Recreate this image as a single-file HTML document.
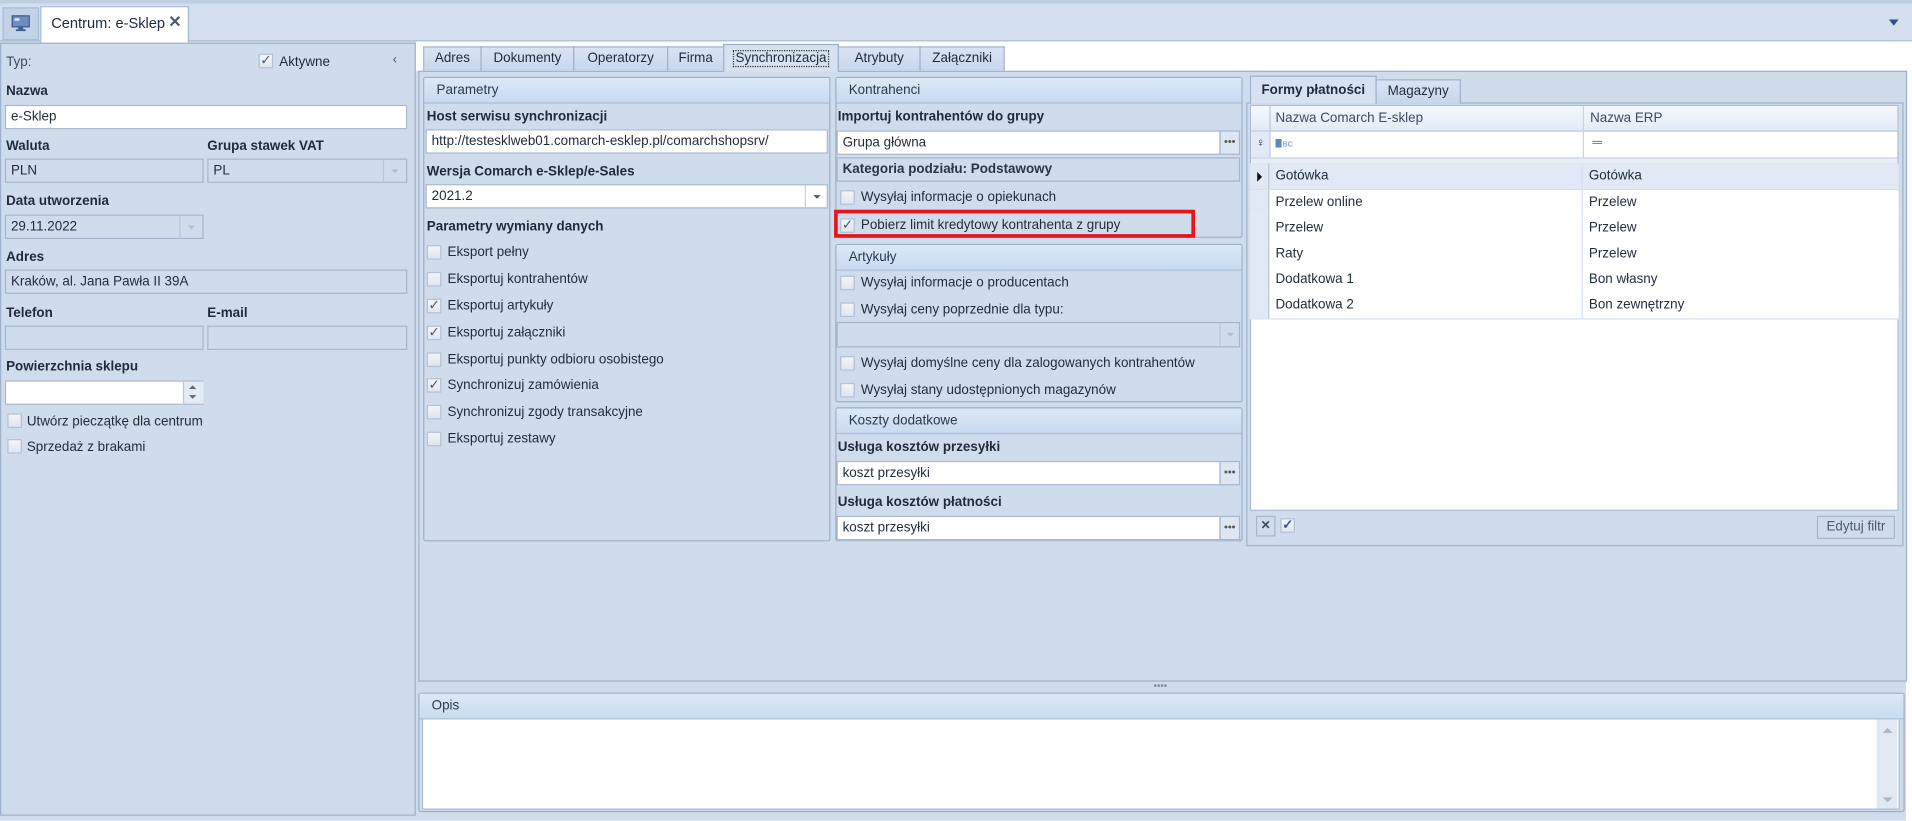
<!DOCTYPE html>
<html><head><meta charset="utf-8">
<style>
html,body{margin:0;padding:0;width:1912px;height:820px;overflow:hidden;background:#fff}
#w{position:absolute;left:0;top:0;width:1568px;height:673px;transform:scale(1.2194);transform-origin:0 0;background:#cfdcec;font-family:"Liberation Sans",sans-serif;font-size:11px;color:#1f2b3c}
.a{position:absolute}
.t{position:absolute;white-space:nowrap;line-height:14px}
.b{font-weight:bold}
.inp{position:absolute;box-sizing:border-box;background:#fff;border:1px solid #a6b7cd;height:20px;line-height:18px;padding-left:4px;white-space:nowrap}
.dis{background:#cfdcec}
.grp{position:absolute;box-sizing:border-box;border:1px solid #9db0ca;border-radius:2px}
.gh{position:absolute;left:0;right:0;top:0;height:20px;background:linear-gradient(#dce8f7,#c9dbf1);border-bottom:1px solid #a9bdd6;line-height:20px;padding-left:10px;color:#2a3850}
.cb{position:absolute;width:10px;height:10px;border:1px solid #b3c2d6;background:linear-gradient(#f2f5f9,#dfe6ef);font-size:11px;line-height:10px;text-align:center;color:#4b5970}
.btn{position:absolute;box-sizing:border-box;width:17px;height:20px;border:1px solid #a6b7cd;background:#dde7f3;font-size:9px;text-align:center;line-height:16px;color:#555}
.arr{position:absolute;width:0;height:0;border-left:3px solid transparent;border-right:3px solid transparent;border-top:3px solid #8a96a8}
.tab{position:absolute;top:38px;height:20px;box-sizing:border-box;border:1px solid #9fb2cb;border-bottom:none;background:linear-gradient(#d8e4f3,#c6d7ec);line-height:19px;text-align:center}
.row{position:absolute;left:1025px;width:532px;height:21px;border-bottom:1px solid #d5e0ee;background:#fff}
.row .i{position:absolute;left:0;top:0;width:15px;height:21px;background:#dfe8f3;border-right:1px solid #b7c7dc}
.row .c1{position:absolute;left:21px;top:4px}
.row .c2{position:absolute;left:278px;top:4px}
.row .s{position:absolute;left:272px;top:0;width:1px;height:21px;background:#d5e0ee}
</style></head><body><div id="w">
<!-- top bar -->
<div class="a" style="left:0;top:0;width:1568px;height:3px;background:#bfcfe2"></div>
<div class="a" style="left:0;top:3px;width:1568px;height:30px;background:#d3dfee"></div>
<div class="a" style="left:2px;top:6px;width:30px;height:27px;background:#c2d3e8;border:1px solid #a8bbd4;box-sizing:border-box"></div>
<svg class="a" style="left:9px;top:12px" width="16" height="14" viewBox="0 0 16 14"><rect x="1" y="1" width="14" height="9" fill="#6d8fbf" stroke="#3f5a86"/><rect x="3" y="3" width="4" height="2" fill="#dfe8f5"/><rect x="6" y="10" width="4" height="2" fill="#3f5a86"/><rect x="4" y="12" width="8" height="1.5" fill="#3f5a86"/></svg>
<div class="a" style="left:0;top:33px;width:1568px;height:1px;background:#a9bcd4"></div>
<div class="a" style="left:33px;top:5px;width:122px;height:30px;background:#fff;border:1px solid #a8bbd4;border-bottom:none;box-sizing:border-box"></div>
<div class="t" style="left:42px;top:12px;font-size:12px;color:#1c2a40">Centrum: e-Sklep</div>
<div class="t b" style="left:138px;top:11px;font-size:13px;color:#4b5a70">✕</div>
<div class="a" style="left:1549px;top:16px;border-left:4px solid transparent;border-right:4px solid transparent;border-top:5px solid #2e4f8a"></div>
<div class="a" style="left:341px;top:34px;width:1227px;height:24px;background:#fff"></div>
<div class="a" style="left:1563px;top:34px;width:5px;height:639px;background:#fff"></div>

<!-- left panel -->
<div class="a" style="left:0;top:35px;width:341px;height:634px;border:1px solid #9fb2cb;box-sizing:border-box"></div>
<div class="t" style="left:5px;top:44px;color:#3c4a60">Typ:</div>
<div class="cb" style="left:212px;top:44px">✓</div>
<div class="t" style="left:229px;top:44px">Aktywne</div>
<div class="t" style="left:322px;top:42px;color:#555">‹</div>
<div class="t b" style="left:5px;top:68px">Nazwa</div>
<div class="inp" style="left:4px;top:86px;width:330px">e-Sklep</div>
<div class="t b" style="left:5px;top:113px">Waluta</div>
<div class="t b" style="left:170px;top:113px">Grupa stawek VAT</div>
<div class="inp dis" style="left:4px;top:130px;width:163px">PLN</div>
<div class="inp dis" style="left:170px;top:130px;width:164px">PL</div>
<div class="a" style="left:314px;top:131px;width:1px;height:18px;background:#b8c7da"></div><div class="arr" style="left:321px;top:139px;border-top-color:#b0bccb"></div>
<div class="t b" style="left:5px;top:158px">Data utworzenia</div>
<div class="inp dis" style="left:4px;top:176px;width:163px">29.11.2022</div>
<div class="a" style="left:147px;top:177px;width:1px;height:18px;background:#b8c7da"></div><div class="arr" style="left:154px;top:185px;border-top-color:#b0bccb"></div>
<div class="t b" style="left:5px;top:204px">Adres</div>
<div class="inp dis" style="left:4px;top:221px;width:330px">Kraków, al. Jana Pawła II 39A</div>
<div class="t b" style="left:5px;top:250px">Telefon</div>
<div class="t b" style="left:170px;top:250px">E-mail</div>
<div class="inp dis" style="left:4px;top:267px;width:163px"></div>
<div class="inp dis" style="left:170px;top:267px;width:164px"></div>
<div class="t b" style="left:5px;top:294px">Powierzchnia sklepu</div>
<div class="inp" style="left:4px;top:312px;width:163px"></div>
<div class="a" style="left:150px;top:313px;width:16px;height:18px;background:#e3ebf5;border-left:1px solid #b8c7da"></div>
<div class="arr" style="left:155px;top:316px;border-top:none;border-bottom:3px solid #666"></div><div class="arr" style="left:155px;top:324px;border-top-color:#666"></div>
<div class="cb" style="left:6px;top:339px"></div><div class="t" style="left:22px;top:339px">Utwórz pieczątkę dla centrum</div>
<div class="cb" style="left:6px;top:360px"></div><div class="t" style="left:22px;top:360px">Sprzedaż z brakami</div>

<!-- tabs -->
<div class="a" style="left:343px;top:58px;width:1221px;height:501px;border:1px solid #9fb2cb;box-sizing:border-box"></div>
<div class="tab" style="left:347px;width:48px">Adres</div>
<div class="tab" style="left:394px;width:77px">Dokumenty</div>
<div class="tab" style="left:470px;width:78px">Operatorzy</div>
<div class="tab" style="left:547px;width:47px">Firma</div>
<div class="tab" style="left:593px;top:36px;height:23px;width:95px;background:#d6e2f1;line-height:22px"><span style="border:1px dotted #333;padding:0 1px">Synchronizacja</span></div>
<div class="tab" style="left:687px;width:68px">Atrybuty</div>
<div class="tab" style="left:754px;width:70px">Załączniki</div>

<!-- Parametry -->
<div class="grp" style="left:347px;top:63px;width:334px;height:381px"><div class="gh">Parametry</div></div>
<div class="t b" style="left:350px;top:89px">Host serwisu synchronizacji</div>
<div class="inp" style="left:349px;top:106px;width:330px">http://testesklweb01.comarch-esklep.pl/comarchshopsrv/</div>
<div class="t b" style="left:350px;top:134px">Wersja Comarch e-Sklep/e-Sales</div>
<div class="inp" style="left:349px;top:151px;width:330px">2021.2</div>
<div class="a" style="left:660px;top:152px;width:1px;height:18px;background:#c5d2e2"></div><div class="arr" style="left:667px;top:160px;border-top-color:#555"></div>
<div class="t b" style="left:350px;top:179px">Parametry wymiany danych</div>
<div class="cb" style="left:350px;top:201px"></div><div class="t" style="left:367px;top:200px">Eksport pełny</div>
<div class="cb" style="left:350px;top:223px"></div><div class="t" style="left:367px;top:222px">Eksportuj kontrahentów</div>
<div class="cb" style="left:350px;top:245px">✓</div><div class="t" style="left:367px;top:244px">Eksportuj artykuły</div>
<div class="cb" style="left:350px;top:267px">✓</div><div class="t" style="left:367px;top:266px">Eksportuj załączniki</div>
<div class="cb" style="left:350px;top:289px"></div><div class="t" style="left:367px;top:288px">Eksportuj punkty odbioru osobistego</div>
<div class="cb" style="left:350px;top:310px">✓</div><div class="t" style="left:367px;top:309px">Synchronizuj zamówienia</div>
<div class="cb" style="left:350px;top:332px"></div><div class="t" style="left:367px;top:331px">Synchronizuj zgody transakcyjne</div>
<div class="cb" style="left:350px;top:354px"></div><div class="t" style="left:367px;top:353px">Eksportuj zestawy</div>

<!-- Kontrahenci -->
<div class="grp" style="left:685px;top:63px;width:334px;height:132px"><div class="gh">Kontrahenci</div></div>
<div class="t b" style="left:687px;top:89px">Importuj kontrahentów do grupy</div>
<div class="inp" style="left:686px;top:107px;width:315px">Grupa główna</div>
<div class="btn" style="left:1000px;top:107px">•••</div>
<div class="inp dis" style="left:686px;top:129px;width:331px;font-weight:bold;color:#2a3648">Kategoria podziału: Podstawowy</div>
<div class="cb" style="left:689px;top:156px"></div><div class="t" style="left:706px;top:155px">Wysyłaj informacje o opiekunach</div>
<div class="a" style="left:684px;top:172px;width:296px;height:23px;border:3px solid #e8141d;box-sizing:border-box"></div>
<div class="cb" style="left:689px;top:179px">✓</div><div class="t" style="left:706px;top:178px">Pobierz limit kredytowy kontrahenta z grupy</div>

<!-- Artykuły -->
<div class="grp" style="left:685px;top:200px;width:334px;height:130px"><div class="gh">Artykuły</div></div>
<div class="cb" style="left:689px;top:226px"></div><div class="t" style="left:706px;top:225px">Wysyłaj informacje o producentach</div>
<div class="cb" style="left:689px;top:248px"></div><div class="t" style="left:706px;top:247px">Wysyłaj ceny poprzednie dla typu:</div>
<div class="inp dis" style="left:686px;top:264px;width:331px;height:21px"></div>
<div class="a" style="left:1000px;top:265px;width:1px;height:19px;background:#b8c7da"></div><div class="arr" style="left:1006px;top:273px;border-top-color:#b0bccb"></div>
<div class="cb" style="left:689px;top:292px"></div><div class="t" style="left:706px;top:291px">Wysyłaj domyślne ceny dla zalogowanych kontrahentów</div>
<div class="cb" style="left:689px;top:314px"></div><div class="t" style="left:706px;top:313px">Wysyłaj stany udostępnionych magazynów</div>

<!-- Koszty -->
<div class="grp" style="left:685px;top:334px;width:334px;height:110px"><div class="gh">Koszty dodatkowe</div></div>
<div class="t b" style="left:687px;top:360px">Usługa kosztów przesyłki</div>
<div class="inp" style="left:686px;top:378px;width:315px">koszt przesyłki</div>
<div class="btn" style="left:1000px;top:378px">•••</div>
<div class="t b" style="left:687px;top:405px">Usługa kosztów płatności</div>
<div class="inp" style="left:686px;top:423px;width:315px">koszt przesyłki</div>
<div class="btn" style="left:1000px;top:423px">•••</div>

<!-- right grid -->
<div class="a" style="left:1022px;top:84px;width:539px;height:364px;border:1px solid #9fb2cb;box-sizing:border-box"></div>
<div class="tab" style="left:1025px;top:62px;height:23px;width:104px;background:#d6e2f1;line-height:22px;font-weight:bold">Formy płatności</div>
<div class="tab" style="left:1128px;top:65px;height:20px;width:70px">Magazyny</div>
<div class="a" style="left:1025px;top:86px;width:532px;height:333px;background:#fff;border:1px solid #a9bcd4;box-sizing:border-box"></div>
<div class="a" style="left:1026px;top:87px;width:530px;height:20px;background:linear-gradient(#f4f8fc,#e2ebf6);border-bottom:1px solid #b7c7dc"></div>
<div class="a" style="left:1041px;top:87px;width:1px;height:42px;background:#b7c7dc"></div>
<div class="a" style="left:1298px;top:87px;width:1px;height:42px;background:#c8d5e6"></div>
<div class="t" style="left:1046px;top:90px;color:#3c4a60">Nazwa Comarch E-sklep</div>
<div class="t" style="left:1304px;top:90px;color:#3c4a60">Nazwa ERP</div>
<div class="a" style="left:1026px;top:108px;width:15px;height:21px;background:#e2ebf5"></div>
<div class="t" style="left:1030px;top:111px;font-size:10px">♀</div>
<div class="a" style="left:1046px;top:114px;width:5px;height:7px;background:#5b86c8"></div>
<div class="t" style="left:1052px;top:112px;font-size:6px;color:#5b86c8">BC</div>
<div class="t" style="left:1306px;top:110px;color:#777">═</div>
<div class="a" style="left:1026px;top:129px;width:530px;height:4px;background:#e8eef6;border-top:1px solid #c8d5e6;border-bottom:1px solid #a9bcd4"></div>
<div class="row" style="top:134px;background:#e0e9f5"><div class="i"></div><div class="s"></div><div class="c1">Gotówka</div><div class="c2">Gotówka</div><div class="a" style="left:6px;top:7px;border-top:4px solid transparent;border-bottom:4px solid transparent;border-left:4px solid #111"></div></div>
<div class="row" style="top:156px"><div class="i"></div><div class="s"></div><div class="c1">Przelew online</div><div class="c2">Przelew</div></div>
<div class="row" style="top:177px"><div class="i"></div><div class="s"></div><div class="c1">Przelew</div><div class="c2">Przelew</div></div>
<div class="row" style="top:198px"><div class="i"></div><div class="s"></div><div class="c1">Raty</div><div class="c2">Przelew</div></div>
<div class="row" style="top:219px"><div class="i"></div><div class="s"></div><div class="c1">Dodatkowa 1</div><div class="c2">Bon własny</div></div>
<div class="row" style="top:240px"><div class="i"></div><div class="s"></div><div class="c1">Dodatkowa 2</div><div class="c2">Bon zewnętrzny</div></div>
<div class="a" style="left:1030px;top:423px;width:16px;height:17px;border:1px solid #a6b7cd;box-sizing:border-box;text-align:center;font-size:10px;font-weight:bold;line-height:15px;color:#3c4a60">✕</div>
<div class="cb" style="left:1050px;top:425px;color:#3a5a9a;font-weight:bold">✓</div>
<div class="a" style="left:1490px;top:423px;width:64px;height:19px;border:1px solid #a6b7cd;box-sizing:border-box;text-align:center;line-height:17px;color:#4a5a72">Edytuj filtr</div>

<!-- splitter -->
<div class="t" style="left:946px;top:556px;font-size:8px;color:#7a8aa0">••••</div>
<!-- Opis -->
<div class="grp" style="left:343px;top:568px;width:1219px;height:98px"><div class="gh">Opis</div></div>
<div class="a" style="left:346px;top:589px;width:1212px;height:75px;background:#fff;border:1px solid #a9bcd4;box-sizing:border-box"></div>
<div class="a" style="left:1539px;top:590px;width:17px;height:73px;background:#dfe8f3"></div>
<div class="arr" style="left:1544px;top:597px;border-top:none;border-bottom:4px solid #a9b6c8;border-left-width:4px;border-right-width:4px"></div>
<div class="arr" style="left:1544px;top:654px;border-top:4px solid #a9b6c8;border-left-width:4px;border-right-width:4px"></div>
</div></body></html>
